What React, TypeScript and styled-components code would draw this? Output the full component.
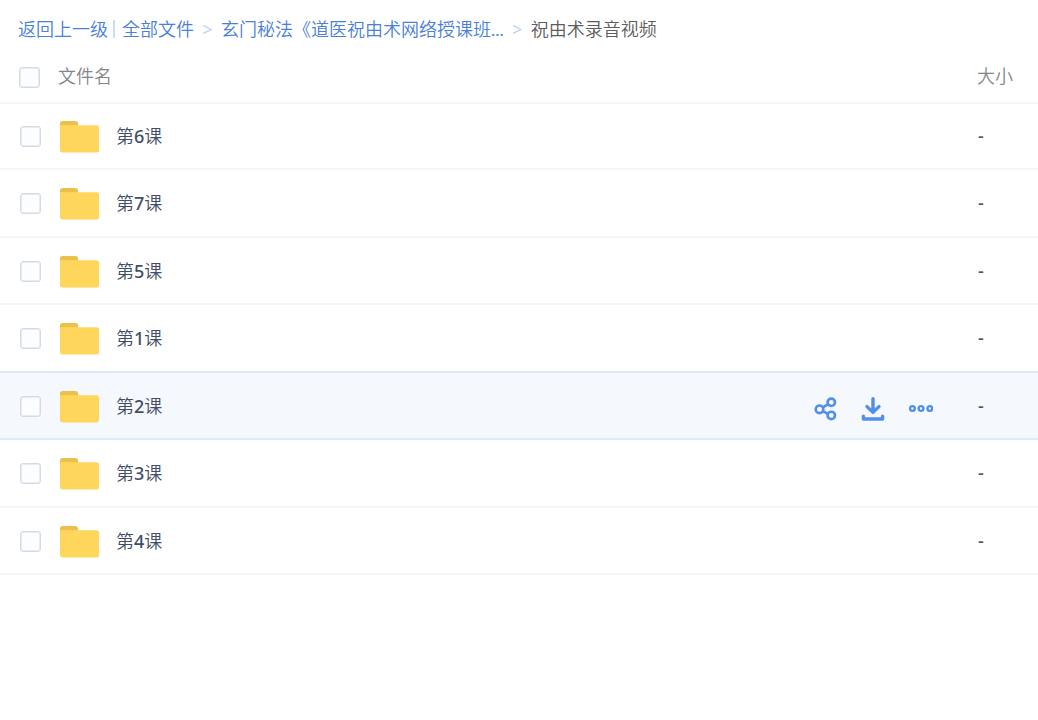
import React from "react";
import styled, { createGlobalStyle, css } from "styled-components";

const GlobalStyle = createGlobalStyle`
  * { box-sizing: border-box; }
  body {
    margin: 0;
    background: #fff;
    color: #424e67;
    font: 350 18px/24px "Noto Sans", "Noto Sans CJK SC", sans-serif;
  }
`;

const Breadcrumb = styled.nav`
  display: flex;
  align-items: center;
  height: 52px;
  padding: 6px 18px 0;
  white-space: nowrap;
  font-family: Lato, "Noto Sans CJK SC", sans-serif;
`;

const Crumb = styled.a`
  color: #4a80d8;
  text-decoration: none;
`;

const Ellipsis = styled.span`
  font-weight: 400;
`;

const Current = styled.span`
  color: #5c5c5c;
`;

const Divider = styled.span`
  width: 2px;
  height: 18px;
  margin: 0 7px 0 5px;
  background: #c9dcf5;
`;

const Separator = styled.span`
  width: 27px;
  text-align: center;
  font-family: "Noto Sans", sans-serif;
  font-weight: 400;
  color: #bfd3f0;
`;

const FileTable = styled.table`
  width: 100%;
  table-layout: fixed;
  border-collapse: separate;
  border-spacing: 0;
`;

const HeadCell = styled.th<{ $width?: number }>`
  width: ${(p) => (p.$width ? `${p.$width}px` : "auto")};
  height: 52px;
  padding: 0 0 2px;
  border-bottom: 2px solid #f2f6fa;
  color: #868686;
  font-weight: 350;
  text-align: left;

  &:first-child { padding: 0; }
`;

const Cell = styled.td`
  height: 67px;
  padding: 0;
  border-bottom: 2px solid #f2f6fa;
`;

const CheckCell = styled(Cell)`
  padding-top: 1px;
`;

const SizeCell = styled(Cell)`
  padding: 0 0 2px 1px;
  color: #555;
  font-weight: 500;
`;

const Row = styled.tr<{ $active?: boolean; $beforeActive?: boolean }>`
  &:first-child ${Cell} { height: 66px; }
  &:nth-child(even) ${Cell} { height: 68px; }
  ${(p) => p.$active && css`background: #f5f9fe;`}
  ${(p) => (p.$active || p.$beforeActive) && css`
    ${Cell} { border-color: #daeaf8; }
  `}
`;

const Checkbox = styled.input<{ $head?: boolean }>`
  appearance: none;
  display: block;
  width: 21px;
  height: 21px;
  margin: 0 0 0 ${(p) => (p.$head ? 19 : 20)}px;
  border: 1px solid #d5dbe4;
  border-radius: 3px;
  background: #fcfdff;
  box-shadow: inset 0 0 0 1px #e8ecf2;
`;

const FileName = styled.div`
  display: flex;
  align-items: center;
  gap: 17px;
  padding-left: 2px;

  svg { margin-top: 2px; }
`;

const LessonNumber = styled.span`
  font-weight: 500;
`;

const Actions = styled.div`
  display: flex;
  gap: 24px;
  padding-top: 6px;
`;

const IconButton = styled.button`
  display: block;
  width: 24px;
  height: 24px;
  padding: 0;
  border: 0;
  background: none;
  color: #528fe6;
  cursor: pointer;

  svg { display: block; }
`;

const FolderIcon = () => (
  <svg width="39" height="32" viewBox="0 0 39 32" aria-hidden="true">
    <path d="M0 8V2.5Q0 0 2.5 0H15.5Q18 0 18 2.5V8Z" fill="#ecc04c" />
    <path d="M0 4.3H36.5Q39 4.3 39 6.8V29Q39 31.5 36.5 31.5H2.8Q0 31.5 0 29Z" fill="#ffd65c" />
  </svg>
);

const ShareIcon = () => (
  <svg width="24" height="24" viewBox="0 0 24 24" fill="none" stroke="currentColor" strokeWidth="2.6" aria-hidden="true">
    <circle cx="6.5" cy="12.3" r="3.8" />
    <circle cx="18.3" cy="5.3" r="3.7" />
    <circle cx="18.3" cy="18.4" r="3.7" />
    <path d="M9.4 10.6L15.3 7.2M9.4 14L15.2 16.8" />
  </svg>
);

const DownloadIcon = () => (
  <svg width="24" height="24" viewBox="0 0 24 24" fill="none" stroke="currentColor" strokeWidth="3.4" strokeLinecap="round" strokeLinejoin="round" aria-hidden="true">
    <path d="M12 1.8V15M6 9.6L12 15.4L18 9.6" />
    <path d="M2.4 19.2V22H21.6V19.2" />
  </svg>
);

const MoreIcon = () => (
  <svg width="24" height="24" viewBox="0 0 24 24" fill="none" stroke="currentColor" strokeWidth="2.4" aria-hidden="true">
    <circle cx="3.4" cy="11.5" r="2.4" />
    <circle cx="12" cy="11.5" r="2.4" />
    <circle cx="20.8" cy="11.5" r="2.4" />
  </svg>
);

const lessons = [6, 7, 5, 1, 2, 3, 4];
const activeIndex = 4;

export default function App() {
  return (
    <>
      <GlobalStyle />
      <Breadcrumb aria-label="路径">
        <Crumb href="#back">返回上一级</Crumb>
        <Divider />
        <Crumb href="#all">全部文件</Crumb>
        <Separator>&gt;</Separator>
        <Crumb href="#course">玄门秘法《道医祝由术网络授课班<Ellipsis>...</Ellipsis></Crumb>
        <Separator>&gt;</Separator>
        <Current>祝由术录音视频</Current>
      </Breadcrumb>
      <FileTable>
        <thead>
          <tr>
            <HeadCell $width={58}>
              <Checkbox type="checkbox" $head aria-label="全选" />
            </HeadCell>
            <HeadCell>文件名</HeadCell>
            <HeadCell $width={164} aria-label="操作" />
            <HeadCell $width={61}>大小</HeadCell>
          </tr>
        </thead>
        <tbody>
          {lessons.map((lesson, i) => (
            <Row key={lesson} $active={i === activeIndex} $beforeActive={i === activeIndex - 1}>
              <CheckCell>
                <Checkbox type="checkbox" aria-label={`第${lesson}课`} />
              </CheckCell>
              <Cell>
                <FileName>
                  <FolderIcon />
                  <span>第<LessonNumber>{lesson}</LessonNumber>课</span>
                </FileName>
              </Cell>
              <Cell>
                {i === activeIndex && (
                  <Actions>
                    <IconButton type="button" aria-label="分享"><ShareIcon /></IconButton>
                    <IconButton type="button" aria-label="下载"><DownloadIcon /></IconButton>
                    <IconButton type="button" aria-label="更多"><MoreIcon /></IconButton>
                  </Actions>
                )}
              </Cell>
              <SizeCell>-</SizeCell>
            </Row>
          ))}
        </tbody>
      </FileTable>
    </>
  );
}
